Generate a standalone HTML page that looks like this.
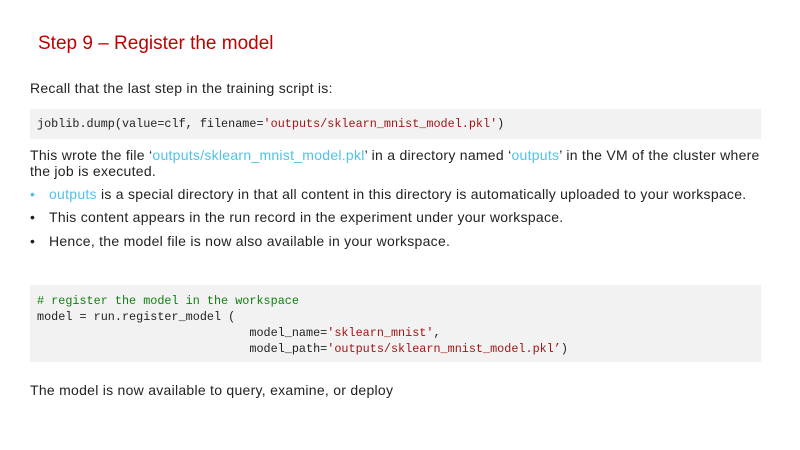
<!DOCTYPE html>
<html><head><meta charset="utf-8"><style>
body{margin:0;width:800px;height:450px;background:#fff;position:relative;overflow:hidden;font-family:"Liberation Sans",sans-serif;color:#222;}
.t{position:absolute;font-size:14px;white-space:nowrap;letter-spacing:0.27px;}
.c{color:#4ec3e6}
.code{position:absolute;left:30px;width:731px;background:#f2f2f2;}
.m{position:absolute;font-family:"Liberation Mono",monospace;font-size:11.8px;white-space:pre;color:#222;}
.s{color:#a31515}.g{color:#108010}
</style></head><body>
<div class="t" style="left:38px;top:33px;font-size:19px;color:#c00000;letter-spacing:0;">Step 9 – Register the model</div>
<div class="t" style="left:30px;top:80px;">Recall that the last step in the training script is:</div>
<div class="code" style="top:109px;height:30px;"></div>
<div class="m" style="left:37px;top:117px;">joblib.dump(value=clf, filename=<span class="s">'outputs/sklearn_mnist_model.pkl'</span>)</div>
<div class="t" style="left:30px;top:147px;">This wrote the file ‘<span class="c">outputs/sklearn_mnist_model.pkl</span>’ in a directory named ‘<span class="c">outputs</span>’ in the VM of the cluster where</div>
<div class="t" style="left:30px;top:163px;">the job is executed.</div>
<div class="t" style="left:30px;top:186px;"><span class="c">•</span></div>
<div class="t" style="left:49px;top:186px;"><span class="c">outputs</span> is a special directory in that all content in this directory is automatically uploaded to your workspace.</div>
<div class="t" style="left:30px;top:209px;">•</div>
<div class="t" style="left:49px;top:209px;">This content appears in the run record in the experiment under your workspace.</div>
<div class="t" style="left:30px;top:233px;">•</div>
<div class="t" style="left:49px;top:233px;">Hence, the model file is now also available in your workspace.</div>
<div class="code" style="top:285px;height:77px;"></div>
<div class="m" style="left:37px;top:293px;line-height:16px;"><span class="g"># register the model in the workspace</span>
model = run.register_model (
                              model_name=<span class="s">'sklearn_mnist'</span>,
                              model_path=<span class="s">'outputs/sklearn_mnist_model.pkl’</span>)</div>
<div class="t" style="left:30px;top:382px;">The model is now available to query, examine, or deploy</div>
</body></html>
